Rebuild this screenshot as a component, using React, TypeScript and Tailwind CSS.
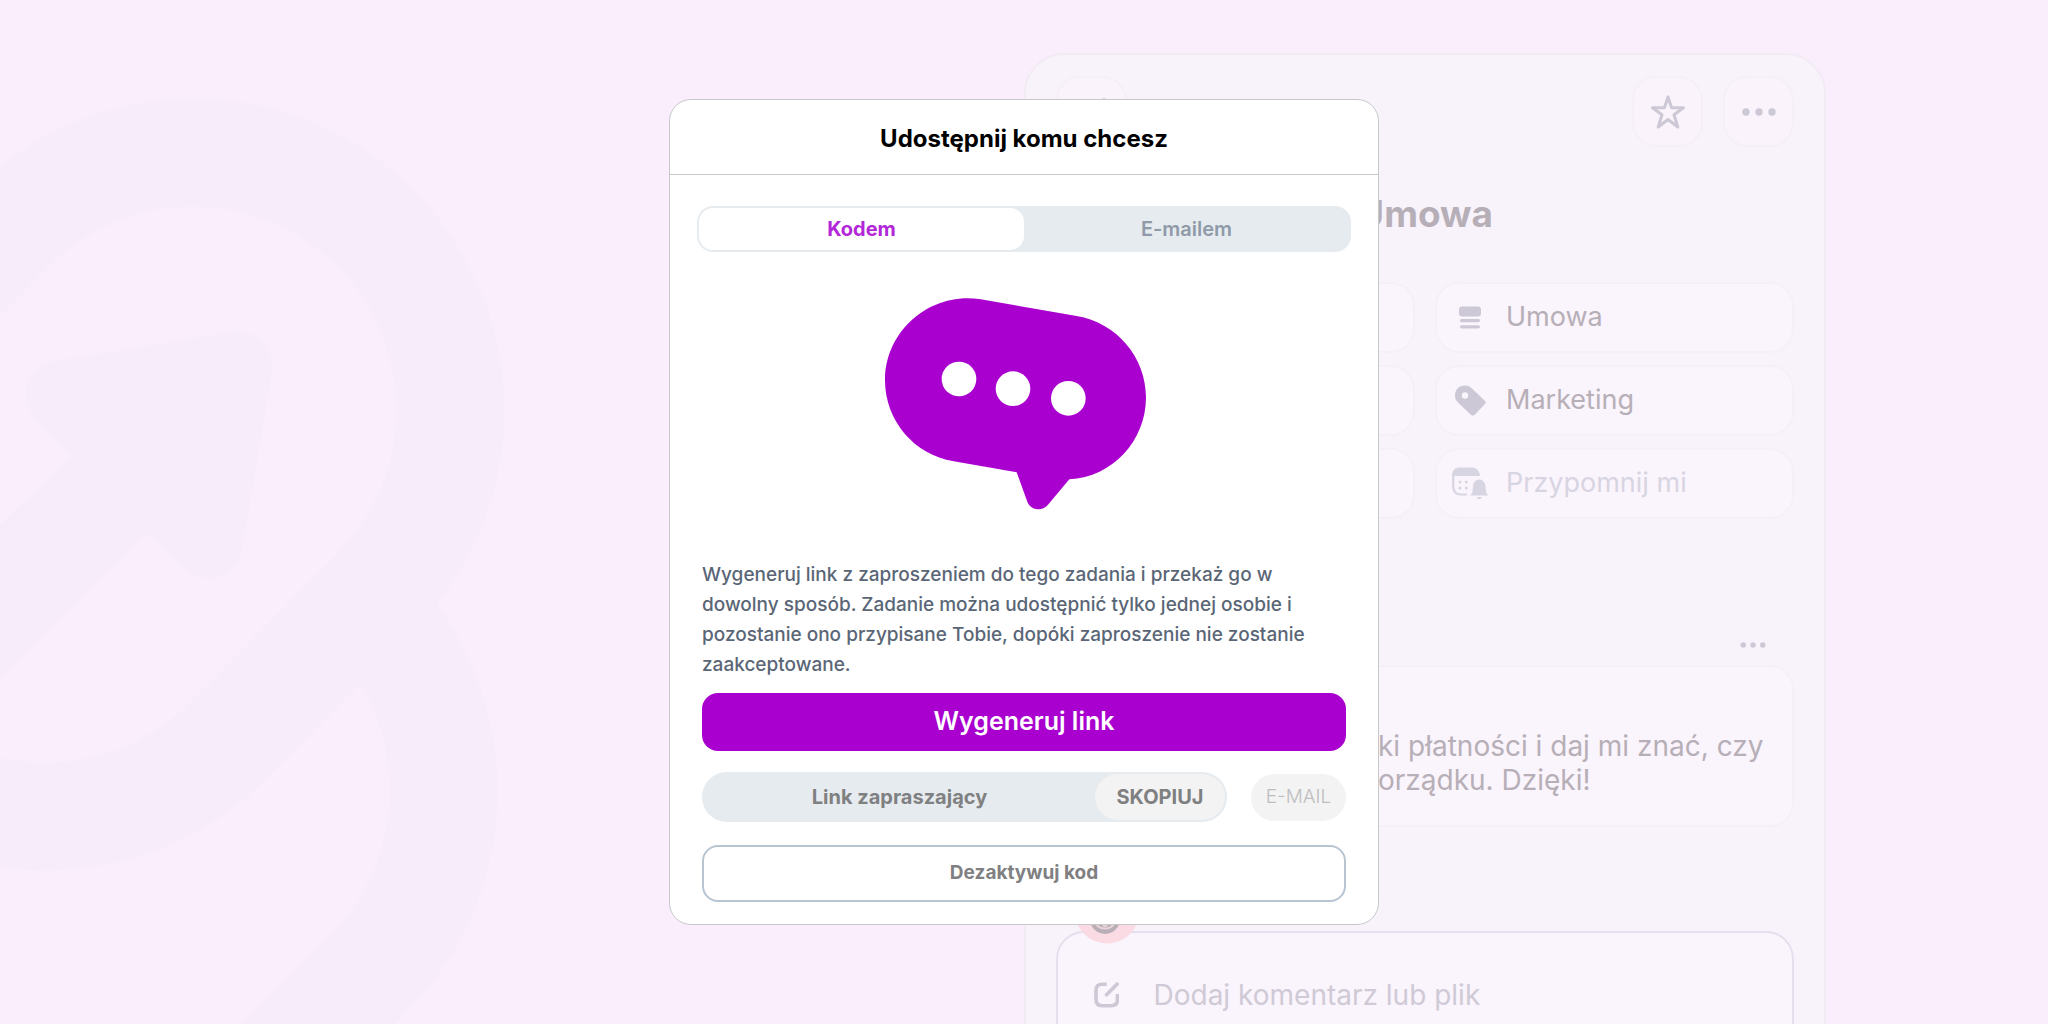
import type { ReactNode } from "react";

function BackgroundLogo() {
  return (
    <svg
      aria-hidden="true"
      className="absolute left-0 top-0 h-[1024px] w-[560px]"
      viewBox="0 0 560 1024"
      fill="none"
      stroke="#f7ecfa"
      strokeWidth="108"
    >
      <path d="M11 228 L-136 377 A257 257 0 0 0 228 741 L375 592 A257 257 0 0 0 11 228Z" />
      <path d="M380 620 A260 260 0 0 1 368 974 L68 1274" />
      <path
        stroke="none"
        fill="#f7ecfa"
        d="M50 362 L229 332 C256 328 276 346 272 373 L242 550 C236 581 202 587 180 566 L147 533 L0 679 V525 L71 456 L36 421 C18 402 26 367 50 362Z"
      />
    </svg>
  );
}

function ChatBubble() {
  return (
    <svg aria-hidden="true" className="h-[212px] w-[278px]" viewBox="75 54 834 636">
      <path
        fill="#a900d0"
        d="M362 58 L650 108 C770 128 858 232 858 352 C858 482 758 592 628 598 L564 674 C545 696 511 690 502 665 L470 577 L281 544 C162 525 75 421 75 301 C75 151 212 34 362 58Z"
      />
      <circle cx="297" cy="297" r="52" fill="#fff" />
      <circle cx="459" cy="326" r="52" fill="#fff" />
      <circle cx="625" cy="355" r="52" fill="#fff" />
    </svg>
  );
}

function StarIcon() {
  return (
    <svg className="size-9" viewBox="0 0 36 36" fill="none" stroke="#cdc8d5" strokeWidth="3" strokeLinejoin="round">
      <path d="M18 3 L21.6 13.7 H33.5 L24 20.7 L27.8 33 L18 25.5 L8.2 33 L12 20.7 L2.5 13.7 H14.4Z" />
    </svg>
  );
}

function DotsIcon({ className }: { className: string }) {
  return (
    <svg className={className} viewBox="0 0 34 8" fill="#cdc8d5">
      <circle cx="4" cy="4" r="3.7" />
      <circle cx="17" cy="4" r="3.7" />
      <circle cx="30" cy="4" r="3.7" />
    </svg>
  );
}

function SectionIcon() {
  return (
    <svg className="size-9" viewBox="0 0 36 36" fill="#cdc8d5">
      <rect x="7" y="6.5" width="22" height="10" rx="3" />
      <rect x="8" y="19" width="20" height="3.2" rx="1.6" />
      <rect x="8" y="25.2" width="20" height="3.2" rx="1.6" />
    </svg>
  );
}

function TagIcon() {
  return (
    <svg className="size-9" viewBox="0 0 36 36">
      <path
        fill="#cdc8d5"
        d="M3 13 C3 6.5 7 2.5 13 2.5 C16 2.5 18 3.5 20 5.5 L32.5 17.5 C34 19 34 20 32.5 21.5 L23 31.5 C21.5 33 20 33 18.5 31.5 L6 19.5 C4 17.5 3 15.5 3 13Z"
      />
      <circle cx="13" cy="12.5" r="3.2" fill="#faf4fc" />
    </svg>
  );
}

function ReminderIcon() {
  return (
    <svg className="size-9 overflow-visible" viewBox="0 0 36 36" fill="#d8d5e2">
      <path d="M0 10 C0 4 3 1.5 8 1.5 H19 C24 1.5 27.5 4 28 10Z" />
      <path d="M1.2 9 V20 C1.2 26 3.5 28.5 9 28.5 H14" fill="none" stroke="#d8d5e2" strokeWidth="2.2" strokeLinecap="round" />
      <circle cx="8" cy="16" r="1.5" />
      <circle cx="14.3" cy="16" r="1.5" />
      <circle cx="8" cy="22" r="1.5" />
      <circle cx="14.3" cy="22" r="1.5" />
      <path d="M18 29.5 C21 27 20.5 25 21 20 C21.5 16 24 13.5 27.3 13.5 C30.5 13.5 33 16 33.5 20 C34 25 33.5 27 36.5 29.5Z" />
      <path d="M24.8 31 H29.8 C29.5 34 25.2 34 24.8 31Z" />
    </svg>
  );
}

function EditIcon() {
  return (
    <svg className="size-7" viewBox="0 0 28 28" fill="none" stroke="#cdc8d5" strokeWidth="4">
      <path d="M14 2.2 H9 C4 2.2 2.2 4.5 2.2 9 V19 C2.2 23.7 4.5 25.8 9 25.8 H19 C23.7 25.8 25.8 23.5 25.8 19 V13" />
      <path d="M13.8 13.8 L25.5 2" strokeLinecap="round" />
    </svg>
  );
}

function Avatar() {
  return (
    <svg aria-hidden="true" className="absolute -top-[55px] left-4 size-[66px]" viewBox="0 0 66 66">
      <circle cx="33" cy="33" r="32.5" fill="#fadbe3" />
      <circle cx="31" cy="41" r="15" fill="#b9aeb6" />
      <path d="M22 46 C26 52 36 52 40 46" fill="none" stroke="#ead5dc" strokeWidth="2" />
      <circle cx="31" cy="46" r="3" fill="#ead5dc" />
    </svg>
  );
}

const iconButton =
  "flex size-[71px] items-center justify-center rounded-3xl border-2 border-[#f5eff7] bg-[#faf3fb]";
const field =
  "flex h-[71px] w-full items-center gap-[18px] rounded-3xl border-2 border-[#f5eff7] bg-[#faf4fc] px-[15px] text-left text-[27px]";

function Field({ icon, label, muted }: { icon: ReactNode; label: string; muted?: boolean }) {
  return (
    <button type="button" className={`${field} ${muted ? "text-[#d8d5e2]" : "text-[#b7afb7]"}`}>
      {icon}
      {label}
    </button>
  );
}

function TaskPanel() {
  return (
    <main className="ml-[50%] mt-[53px] w-full max-w-[802px] rounded-t-[40px] border-2 border-[#f1ebf3] bg-[#f8f3fb] px-[30px] pt-[21px]">
      <header className="flex items-center gap-5">
        <button type="button" aria-label="Wstecz" className={`${iconButton} mr-auto`}>
          <svg className="size-8" viewBox="0 0 32 32" fill="none" stroke="#cdc8d5" strokeWidth="4" strokeLinecap="round">
            <path d="M28 4 L16 16 L28 28" />
          </svg>
        </button>
        <button type="button" aria-label="Ulubione" className={iconButton}>
          <StarIcon />
        </button>
        <button type="button" aria-label="Więcej" className={iconButton}>
          <DotsIcon className="h-2 w-[34px]" />
        </button>
      </header>

      <h1 className="mt-[43px] text-center text-[37px]/12 font-bold text-[#b7afb7]">Umowa</h1>

      <div className="mt-11 grid grid-cols-2 gap-x-5 gap-y-3">
        <div className={field} />
        <Field icon={<SectionIcon />} label="Umowa" />
        <div className={field} />
        <Field icon={<TagIcon />} label="Marketing" />
        <div className={field} />
        <Field icon={<ReminderIcon />} label="Przypomnij mi" muted />
      </div>

      <button type="button" aria-label="Opcje komentarza" className="ml-auto mr-[27px] mt-[123px] block">
        <DotsIcon className="h-1.5 w-7" />
      </button>
      <p className="mt-[17px] rounded-3xl border-2 border-[#f5eff7] bg-[#faf4fc] pb-7 pl-80 pt-[62px] text-[28px]/[34px] text-[#b7afb7]">
        ki płatności i daj mi znać, czy
        <br />
        orządku. Dzięki!
      </p>

      <div className="relative mt-[104px] rounded-t-[28px] border-2 border-[#e4dfed] bg-[#faf4fc]">
        <Avatar />
        <label className="flex items-center gap-[34px] px-9 py-10">
          <EditIcon />
          <input
            type="text"
            aria-label="Dodaj komentarz lub plik"
            placeholder="Dodaj komentarz lub plik"
            className="h-11 w-full bg-transparent text-[28px] outline-none placeholder:text-[#cfcad6]"
          />
        </label>
      </div>
    </main>
  );
}

function ShareDialog() {
  return (
    <section
      role="dialog"
      aria-labelledby="share-title"
      className="w-full max-w-[710px] rounded-[22px] border border-[#c6c8ca] bg-white"
    >
      <h2
        id="share-title"
        className="border-b border-[#c6c8ca] pb-[19px] pt-[23px] text-center text-2xl/8 font-bold text-black"
      >
        Udostępnij komu chcesz
      </h2>

      <div
        role="tablist"
        className="mx-[27px] mt-[31px] grid h-[46px] grid-cols-2 rounded-2xl border-2 border-[#e6ebef] bg-[#e6ebef] text-xl"
      >
        <button type="button" role="tab" aria-selected="true" className="rounded-[14px] bg-white font-bold text-[#b227d8]">
          Kodem
        </button>
        <button type="button" role="tab" aria-selected="false" className="font-semibold text-[#8f9aa9]">
          E-mailem
        </button>
      </div>

      <div className="mt-[46px] flex justify-center">
        <ChatBubble />
      </div>

      <div className="px-8 pb-[22px] text-[19px]">
        <p className="mt-[50px] text-[19px]/[30px] font-medium text-[#5a6676]">
          Wygeneruj link z zaproszeniem do tego zadania i przekaż go w dowolny sposób. Zadanie można udostępnić tylko
          jednej osobie i pozostanie ono przypisane Tobie, dopóki zaproszenie nie zostanie zaakceptowane.
        </p>

        <button
          type="button"
          className="mt-[13px] h-[58px] w-full rounded-2xl bg-[#a900d0] text-[25px] font-semibold text-white"
        >
          Wygeneruj link
        </button>

        <div className="mt-[21px] flex items-center gap-6">
          <div className="flex h-[50px] flex-1 rounded-full border-2 border-[#e6ebef] bg-[#e6ebef]">
            <input
              type="text"
              readOnly
              aria-label="Link zapraszający"
              value="Link zapraszający"
              className="w-0 flex-1 bg-transparent text-center text-xl font-bold text-[#7f8081] outline-none"
            />
            <button type="button" className="w-[130px] rounded-full bg-[#f3f3f3] text-xl font-bold text-[#7f8081]">
              SKOPIUJ
            </button>
          </div>
          <button type="button" className="h-[47px] w-[95px] rounded-full bg-[#f3f3f3] font-light text-[#bdbebf]">
            E-MAIL
          </button>
        </div>

        <button
          type="button"
          className="mt-[23px] h-[57px] w-full rounded-2xl border-2 border-[#b7c4d1] font-bold text-[#7f8081]"
        >
          Dezaktywuj kod
        </button>
      </div>
    </section>
  );
}

export default function App() {
  return (
    <div className="relative flow-root h-screen overflow-hidden bg-[#faeefd] font-['Inter',sans-serif]">
      <BackgroundLogo />
      <TaskPanel />
      <div className="absolute inset-0 flex items-start justify-center pt-[99px]">
        <ShareDialog />
      </div>
    </div>
  );
}
